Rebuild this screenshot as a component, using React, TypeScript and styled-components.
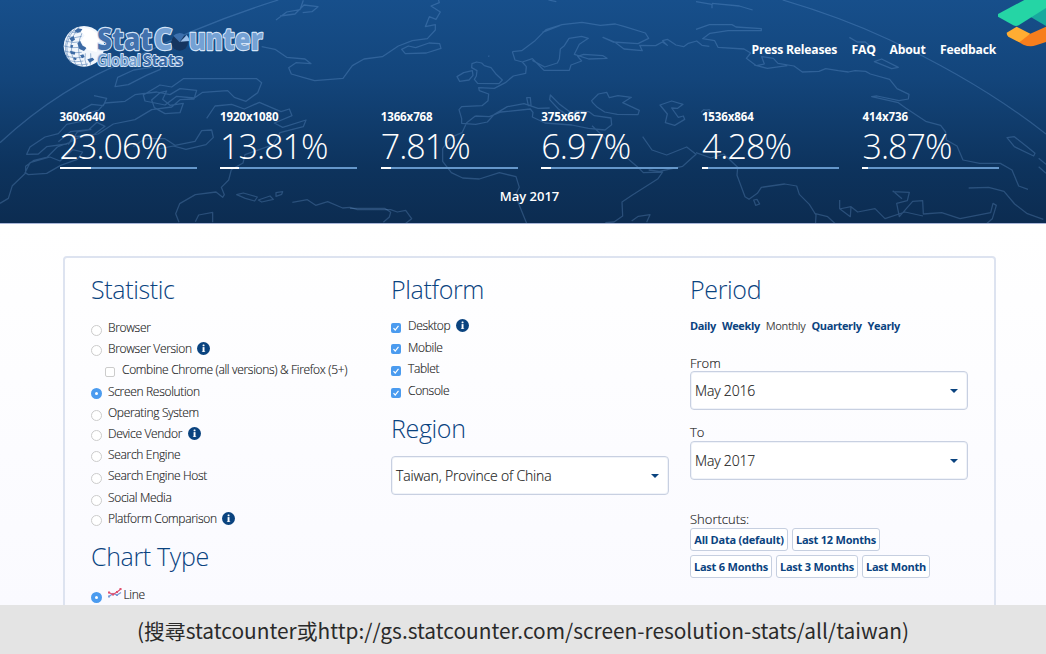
import React from 'react';
import styled, { createGlobalStyle } from 'styled-components';

const navy = '#0a437f';

const GlobalStyle = createGlobalStyle`
  * { box-sizing: border-box; }
  body { margin: 0; background: #fff; overflow: hidden; font-family: 'Open Sans', sans-serif; color: #333; }
  #root { height: 654px; }
`;

const Page = styled.div`
  width: 1046px;
  height: 654px;
  display: flex;
  flex-direction: column;
  overflow: hidden;
`;

const Header = styled.header`
  position: relative;
  flex: none;
  height: 224px;
  background: linear-gradient(#174f8b 0%, #13457b 35%, #0d335d 75%, #0c2c51 100%);
  border-bottom: 1px solid #a9b6d8;
  color: #fff;
`;

const MapBackground = styled.svg`
  position: absolute;
  inset: 0;
  fill: none;
  stroke: rgba(130, 180, 235, 0.25);
  stroke-width: 3.8;
  stroke-linejoin: round;
`;

const CornerBadge = styled.svg`
  position: absolute;
  top: 0;
  right: 0;
`;

const TopBar = styled.div`
  position: relative;
  display: flex;
  justify-content: space-between;
  height: 100px;
  padding: 20px 50px 0 60px;
`;

const Nav = styled.nav`
  display: flex;
  gap: 14.5px;
  padding-top: 20.5px;
  height: 40px;
`;

const NavLink = styled.a<{ $w: number }>`
  font-size: 12.2px;
  line-height: 18px;
  font-weight: 700;
  letter-spacing: -0.2px;
  width: ${(p) => p.$w}px;
  white-space: nowrap;
`;

const Stats = styled.div`
  position: relative;
  display: grid;
  grid-template-columns: repeat(6, 137px);
  column-gap: 23.6px;
  padding: 9px 0 0 59.5px;
`;

const StatLabel = styled.div`
  font-size: 11.5px;
  line-height: 16px;
  font-weight: 700;
  letter-spacing: -0.1px;
`;

const StatValue = styled.div`
  font-size: 34px;
  line-height: 42px;
  font-weight: 300;
  letter-spacing: -0.95px;
`;

const Meter = styled.div`
  height: 2px;
  background: #6597ca;
`;

const MeterFill = styled.div`
  height: 2px;
  background: #fff;
`;

const Caption = styled.div`
  position: relative;
  margin-top: 17px;
  padding-left: 13px;
  text-align: center;
  font-size: 13px;
  line-height: 20px;
  font-weight: 600;
`;

const Content = styled.main`
  flex: 1;
  min-height: 0;
  padding: 32px 50px 0 63px;
  background: linear-gradient(#fff, #fafaff);
`;

const Panel = styled.section`
  height: 400px;
  border: 2px solid #dde3f0;
  border-radius: 4px;
  display: grid;
  grid-template-columns: 300px 299px 278px;
  padding: 0 0 0 26px;
`;

const Column = styled.div`
  display: flex;
  flex-direction: column;
  align-items: flex-start;
`;

const Heading = styled.h2<{ $top: number }>`
  margin: ${(p) => p.$top}px 0 0;
  font-size: 25px;
  line-height: 34px;
  font-weight: 300;
  color: ${navy};
  white-space: nowrap;
  letter-spacing: -0.35px;
`;

const Options = styled.div<{ $top: number }>`
  margin-top: ${(p) => p.$top}px;
`;

const Option = styled.label<{ $h: number; $indent?: boolean }>`
  display: flex;
  align-items: flex-start;
  height: ${(p) => p.$h}px;
  gap: 6px;
  padding-left: ${(p) => (p.$indent ? 14 : 0)}px;
  font-size: 12px;
  line-height: 16px;
  white-space: nowrap;
`;

const OptionText = styled.span`
  font-weight: 300;
  color: #222;
  letter-spacing: -0.32px;
  -webkit-text-stroke: 0.15px #222;
`;

const Radio = styled.span<{ $on?: boolean }>`
  flex: none;
  width: 11px;
  height: 11px;
  margin: 4.5px 0 0;
  border-radius: 50%;
  border: ${(p) => (p.$on ? '4px solid #4b9bef' : '1px solid #ccc')};
  background: #fff;
`;

const EmptyCheck = styled.span`
  flex: none;
  width: 10px;
  height: 10px;
  margin: 5px 1px 0 0;
  border-radius: 2px;
  border: 1px solid #ccc;
  background: #fff;
`;

const Select = styled.div<{ $top: number }>`
  display: flex;
  align-items: center;
  justify-content: space-between;
  width: 278px;
  height: 39px;
  margin-top: ${(p) => p.$top}px;
  padding: 0 9px 0 4px;
  border: 1px solid #c8d0e1;
  box-shadow: inset 0 0 0 1px #f0f3f9;
  border-radius: 4px;
  background: #fff;
  font-size: 14px;
  font-weight: 300;
  letter-spacing: -0.18px;
  color: #222;
  -webkit-text-stroke: 0.15px #222;
`;

const Caret = styled.span`
  border: 4px solid transparent;
  border-top-color: ${navy};
  border-bottom: 0;
`;

const Periods = styled.div`
  display: flex;
  gap: 6px;
  margin-top: 11.5px;
  font-size: 11px;
  line-height: 16px;
  letter-spacing: -0.37px;
`;

const Period = styled.a<{ $current?: boolean }>`
  font-weight: ${(p) => (p.$current ? 400 : 700)};
  color: ${(p) => (p.$current ? '#444' : navy)};
`;

const FieldLabel = styled.div<{ $top: number }>`
  margin-top: ${(p) => p.$top}px;
  font-size: 13px;
  line-height: 18px;
  font-weight: 300;
  color: #222;
  -webkit-text-stroke: 0.15px #222;
`;

const Shortcuts = styled.div`
  display: flex;
  flex-wrap: wrap;
  gap: 4px;
  width: 250px;
`;

const Shortcut = styled.button<{ $w: number }>`
  width: ${(p) => p.$w}px;
  height: 23px;
  padding: 0;
  border: 1px solid #c6cfe0;
  border-radius: 3px;
  background: #fff;
  font: 700 11px/18px 'Open Sans', sans-serif;
  letter-spacing: -0.22px;
  color: ${navy};
  white-space: nowrap;
`;

const Subtitle = styled.footer`
  position: relative;
  flex: none;
  height: 49px;
  background: #e4e4e4;
  text-align: center;
  font-family: 'Noto Sans CJK TC', sans-serif;
  font-size: 20.87px;
  line-height: 50px;
  color: #2a2a2a;
`;

const InfoMark = styled.svg`
  flex: none;
  margin: 1px 0 0 -0.5px;
`;

const CheckMark = styled.svg`
  flex: none;
  margin: 4.5px 1px 0 0;
`;

const LineMark = styled.svg`
  flex: none;
  margin: -0.5px -4.5px 0 0;
`;

const LogoMark = styled.svg`
  overflow: visible;
`;

const InfoIcon = () => (
  <InfoMark width="13" height="13" viewBox="0 0 13 13">
    <circle cx="6.5" cy="6.5" r="6.5" fill={navy} />
    <rect x="5.6" y="5.1" width="1.9" height="4.8" fill="#fff" />
    <rect x="5.6" y="2.5" width="1.9" height="1.7" rx="0.5" fill="#fff" />
    <rect x="4.9" y="9.2" width="3.3" height="0.8" fill="#fff" opacity="0.7" />
  </InfoMark>
);

const Checked = () => (
  <CheckMark width="10" height="10" viewBox="0 0 10 10">
    <rect width="10" height="10" rx="2" fill="#4b9bef" />
    <path d="M2.5 5.2 4.2 7 7.5 2.8" stroke="#fff" strokeWidth="1.2" fill="none" />
  </CheckMark>
);

const LineChartIcon = () => (
  <LineMark width="14" height="12" viewBox="0 0 14 12">
    <path d="M1 9.5 5 6.5l4 1.5 4-2.5" stroke="#7d9bd6" strokeWidth="1.2" fill="none" />
    <path d="M1 5.5l4 2 4-2.500 4-3" stroke="#e0506f" strokeWidth="1.2" fill="none" />
    <path d="M0 4.5h2v2H0zM4 6.500h2v2H4zM8 4h2v2H8zM11.500 1h2v2h-2z" fill="#e0506f" />
    <path d="M0 8.5h2v2H0zM8 7h2v2H8z" fill="#7d9bd6" />
  </LineMark>
);

const Logo = () => (
  <LogoMark width="210" height="52" viewBox="180 60 630 156">
    <circle cx="252" cy="139" r="61" fill="#f1f6fc" />
    <g stroke="#5d87b8" strokeWidth="1.8" fill="none">
      <path d="M214 96q16 6 34-2M203 109q20 8 42 0M196 123q22 8 48 2M192 138q25 8 50 4M193 153q25 9 52 4M198 168q27 9 50 4M208 182q20 6 42 1M224 193q18 4 40-1" />
      <path d="M238 80q-44 50-10 116M226 84q-44 50-14 104M214 92q-28 40-12 84M250 90q-28 52-3 108M256 160q-4 20 4 38M272 160q2 18-1 34" />
    </g>
    <g fill="#3c6aa4">
      <path d="M222 93l12-8 14 3-6 7-10 3zM208 115l13-7 4 11-10 6zM232 130l8-7 8 14 12 6-8 10-14-6zM210 152l16 4-2 8-12-3zM240 166l10-3 4 8-8 4zM262 178l16-5 5 6-14 9zM222 172l8 3-2 6-8-3zM212 134l8 2-3 8-6-2z" />
    </g>
    <path d="M250 84q36 1 50 30l-10 42-26-6-22-26 12-18-12-10z" fill="#fff" />
    <g fontFamily="'Open Sans', sans-serif" fontWeight="800" strokeLinejoin="round" style={{ paintOrder: 'stroke' }} fontSize="92">
      <g stroke="#d3e3f7" strokeWidth="7">
        <text x="291" y="151" textLength="166" lengthAdjust="spacingAndGlyphs" fill="#4271ad">Stat</text>
        <text x="461" y="151" textLength="56" lengthAdjust="spacingAndGlyphs" fill="#74a1d4">C</text>
        <text x="566" y="151" textLength="222" lengthAdjust="spacingAndGlyphs" fill="#74a1d4">unter</text>
      </g>
      <g stroke="#d3e3f7" strokeWidth="6" fontSize="48">
        <text x="291" y="197" textLength="132" lengthAdjust="spacingAndGlyphs" fill="#6f9bcd" fontWeight="600">Global</text>
        <text x="428" y="197" textLength="120" lengthAdjust="spacingAndGlyphs" fill="#3566a3" fontWeight="700">Stats</text>
      </g>
    </g>
    <circle cx="539" cy="127" r="25" fill="#153560" />
    <path d="M539 127 520 107a27 27 0 0 1 34-3z" fill="#3d70ad" />
    <path d="M541 125 560 105a28 28 0 0 1 8 18z" fill="#9cc0ea" />
  </LogoMark>
);

const WorldMap = () => (
  <MapBackground width="1046" height="223" viewBox="0 0 3138 669">
    <path d="M0 428Q180 260 400 175Q610 70 835 0" />
    <path d="M0 610l25-15 12-38 40-38 0-20 25-18 40-10 30-30 40-15 20-30 42-8M80 463l10-22 45-30 40-10 25-28 50-10 0-20 45-12 20-22 60-5 30-20 65-8 40 8 30-18 50 5-8 26-42 2-25 22-60 8-50 30-65 13-46 30-60 12-34 18-60 8-25 22zM75 518l15-30 60-17 30 12 38-34 30 7-16 22-50 18-42 24-55 4zM345 260l8-28 48-22 52-8 35-22-7 28-42 18-54 28zM430 285l50-30 35 6 35-25 220 0 15 12-12 30-35 26-35-12-20-20-75 5-25 17-53-5-35 26-60-12zM455 300l25-22 20-5-12 25 22 18 40-6-10 28-45 3-32-18zM245 330l30-17 35 4 10-22-38-8M175 425l36-30 55-6 25-22 24 12-32 24-65 8-13 23M620 355l25-37 50-5 38 14 45-20 65 28 25-8 8 20-53 22 25 13 70-22-8 20-70 18-20 36-85 30-6 25-35 20-8 31-22 22 9 22-5 8-20-16-62 8-47 27-12 30 10 26M400 440l35-24 60 0 30 20 60-12 20-32 30-2 5 22-22 22-60 14-38-10-50 10M586 665l10-20 42-8 0 30M710 584l20-5 42 12-8 12-28-8zM828 578l20-3-3 8-17 6zM775 600l35-12 10 10-35 8zM877 607l45-8 25 17 36-11 45 19 22-2 22 7 100 0 20 7 25-5 18 25-28 22" />
    <path d="M828 60l32-24 40-7 10-28M840 48l45-6 27-27 42 5-18 15-28 3M785 140l40 8 35 24 55 5 18 14-45-3-22 15 8 19 35 10 35 10 85-7 28-38 35-20 55-7 48-32 42-16 45-6 24-26 0-16-30 6 12-30 20 8 13-22-28-18 25-10-6-20 22-14" />
    <g transform="translate(1050 0)">
      <path d="M155 148l20-10 22 5 40-14 32 2 4 14-44 14-63 2zM487 155l28-3 38-28 35-35 48-15 60-7 55 9 45-4 28 8 62 19 10 16-32 16-75-5-30-14 35 14 28 21 55 5-8-16 48 1 20-11 15 10-14-14 14-4 26 17 23 5 14-10 25-7 16 13 22 3M577 97l54-21M487 155l8 25 22 6 30-10 25 25 10 10 76 0 5-16 32-12-12-14 18-6 58 4 12 8-55 2-43-14 15-30 27-18-20-6-38 6-14 22-12 10-3 30-6 12-38 12-37-20M517 186l12 14-2 20-37 8-24 20-33 17-47-2 2 9 28 10-2 20-18 15-61 3-8 9 8 27 0 14 42 3 35-7 20-22 40-24 50-9 42 14 35-1M380 186l-14 5-1 12 16 9-2 16-6 10 10 12 64 1 10-11-20-19-14-18-20-6-8-8zM321 230l20-12 26-6 2 14-12 14-28 4zM376 348l42 2 35-14 88-9 8 10-2 14 38 18 80 6 50 10 50 5 20-16-2-20-50-7-16-12-40-2-8 10-40-30-28-28-2 14 26 28 30 22-20-16M530 293l5 24 8-2-2-22zM725 302l20-20 25-5 8 16 26-6 40 5-26 16 50 23-4 13-62-1-38-7-22-14-14-14zM930 315l35-12 34 10-16 12-18-1 20 28 15-4 4 10-30 18-28-8 6-26zM376 348l-26 20-14 30-34 14-24 34 0 38 26 34 34 16 50 3 60-19 50 12 10 32-12 24 24 60 10 24M726 377l32 30 20 25 46 36 38 32 18 18 58-2-14 20-78 50-30 20 2 42-26 18-26 2M878 410l28 40 44 15 60-24 28 22-40 36-70 15-32-4M845 663l20-14 35-5-10 23M0 625h104l18 12-4 14-18 16M595 0l24 5M415 170l3-3" />
    </g>
    <g transform="translate(2088 0)">
      <path d="M260 0Q430 50 575 117Q850 245 1050 402M0 5l48 8 0 12M48 10l82 8 40 12M0 88l40-14 68 0 12 7 76 5 0 6-100 0-54 8-22 16 36 6 10 20 78 5 20 12-13 16 30 22 24-5-8-22 35 5 14 15 48 8 25 18 50-2 20-8 38 6 30 4 20-4 32 2 14 8 58 16 22 28 36 17-2 14-28 5-66-14-16 2 80 18 22 16 60 40 45 12 15 20 2 24 32 18 18 42 50 10 62 0 35 20 20 48 28 10M535 185l22-8 50 25-20 4zM460 112l24 14 24 0 32 28M174 195l40 10 60-8M0 458l45 16 38-12 42 40-2 24 24 64 12 8 25-18 12-18 70-10 36 6 8 25 30 30 20 32-2 36M173 600l10-2 8 14-12 4zM355 640l40 10 28 26M430 627l35-7 20 16 52-10 30 30 60-20 54 12M465 620l-2 30-32-24 0-26M590 575l50 2-6 25-32 8 8 40 40-46 30-2 2 40 55-4 55 18 92-18 7-28 10 6-12 40-32 28M590 572l28 24M818 564l60-2 46 12 32 38 36 28 50 18M933 413l22-3 40 32 22 18-4 8-58-28zM1028 475l22 18M1028 500l22 20M15 337l8-8 12 2M30 345q22-20 2-15" />
    </g>
  </MapBackground>
);

const stats: [string, number][] = [
  ['360x640', 23.06],
  ['1920x1080', 13.81],
  ['1366x768', 7.81],
  ['375x667', 6.97],
  ['1536x864', 4.28],
  ['414x736', 3.87],
];

type Item = { text: string; h: number; on?: boolean; info?: boolean; check?: boolean };

const statistics: Item[] = [
  { text: 'Browser', h: 20.5 },
  { text: 'Browser Version', h: 21, info: true },
  { text: 'Combine Chrome (all versions) & Firefox (5+)', h: 22, check: true },
  { text: 'Screen Resolution', h: 21.5, on: true },
  { text: 'Operating System', h: 20.5 },
  { text: 'Device Vendor', h: 21, info: true },
  { text: 'Search Engine', h: 21.5 },
  { text: 'Search Engine Host', h: 22 },
  { text: 'Social Media', h: 20.5 },
  { text: 'Platform Comparison', h: 20, info: true },
];

const platforms: Item[] = [
  { text: 'Desktop', h: 21.5, info: true },
  { text: 'Mobile', h: 21.5 },
  { text: 'Tablet', h: 22 },
  { text: 'Console', h: 22 },
];

export default function App() {
  return (
    <Page>
      <GlobalStyle />
      <Header>
        <WorldMap />
        <TopBar>
          <Logo />
          <Nav>
            <NavLink $w={85.5}>Press Releases</NavLink>
            <NavLink $w={23.5}>FAQ</NavLink>
            <NavLink $w={36}>About</NavLink>
            <NavLink $w={56}>Feedback</NavLink>
          </Nav>
        </TopBar>
        <Stats>
          {stats.map(([name, value]) => (
            <div key={name}>
              <StatLabel>{name}</StatLabel>
              <StatValue>{value.toFixed(2)}%</StatValue>
              <Meter>
                <MeterFill style={{ width: `${value}%` }} />
              </Meter>
            </div>
          ))}
        </Stats>
        <Caption>May 2017</Caption>
        <CornerBadge width="50" height="50" viewBox="0 0 150 150">
          <path d="M103 101l47-21v46l-30 10q-18 6-38-2l-20-12z" fill="#f77e1d" />
          <path d="M32 98 62 80l41 21-33 26-33-17q-5-4-5-12z" fill="#ffad32" />
          <path d="M103 50l47-28v56z" fill="#18a99e" />
          <path d="M6 42 85 0h65v24L68 76q-8 4-16 0L6 50z" fill="#25d5a5" />
        </CornerBadge>
      </Header>
      <Content>
        <Panel>
          <Column>
            <Heading $top={14}>Statistic</Heading>
            <Options $top={14}>
              {statistics.map((s) => (
                <Option key={s.text} $h={s.h} $indent={s.check}>
                  {s.check ? <EmptyCheck /> : <Radio $on={s.on} />}
                  <OptionText>{s.text}</OptionText>
                  {s.info && <InfoIcon />}
                </Option>
              ))}
            </Options>
            <Heading $top={8}>Chart Type</Heading>
            <Options $top={14.5}>
              <Option $h={20}>
                <Radio $on />
                <LineChartIcon />
                <OptionText>Line</OptionText>
              </Option>
            </Options>
          </Column>
          <Column>
            <Heading $top={14}>Platform</Heading>
            <Options $top={12}>
              {platforms.map((s) => (
                <Option key={s.text} $h={s.h}>
                  <Checked />
                  <OptionText>{s.text}</OptionText>
                  {s.info && <InfoIcon />}
                </Option>
              ))}
            </Options>
            <Heading $top={6}>Region</Heading>
            <Select $top={11}>
              Taiwan, Province of China
              <Caret />
            </Select>
          </Column>
          <Column>
            <Heading $top={14}>Period</Heading>
            <Periods>
              <Period>Daily</Period>
              <Period>Weekly</Period>
              <Period $current>Monthly</Period>
              <Period>Quarterly</Period>
              <Period>Yearly</Period>
            </Periods>
            <FieldLabel $top={20}>From</FieldLabel>
            <Select $top={-0.5}>
              May 2016
              <Caret />
            </Select>
            <FieldLabel $top={13}>To</FieldLabel>
            <Select $top={0}>
              May 2017
              <Caret />
            </Select>
            <FieldLabel $top={30}>Shortcuts:</FieldLabel>
            <Shortcuts>
              <Shortcut $w={98}>All Data (default)</Shortcut>
              <Shortcut $w={88}>Last 12 Months</Shortcut>
              <Shortcut $w={82}>Last 6 Months</Shortcut>
              <Shortcut $w={82}>Last 3 Months</Shortcut>
              <Shortcut $w={68}>Last Month</Shortcut>
            </Shortcuts>
          </Column>
        </Panel>
      </Content>
      <Subtitle>(搜尋statcounter或http://gs.statcounter.com/screen-resolution-stats/all/taiwan)</Subtitle>
    </Page>
  );
}
